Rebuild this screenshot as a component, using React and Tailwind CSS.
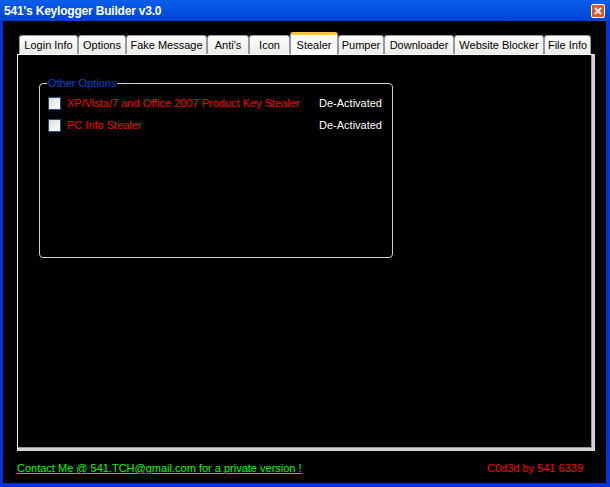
import React from "react";

const tabs = [
  { label: "Login Info", w: "w-[59px]" },
  { label: "Options", w: "w-[48px]" },
  { label: "Fake Message", w: "w-[81px]" },
  { label: "Anti's", w: "w-[42px]" },
  { label: "Icon", w: "w-[41px]" },
  { label: "Stealer", w: "w-[48px]", active: true },
  { label: "Pumper", w: "w-[46px]" },
  { label: "Downloader", w: "w-[70px]" },
  { label: "Website Blocker", w: "w-[90px]" },
  { label: "File Info", w: "w-[47px]" },
];

const options = [
  { label: "XP/Vista/7 and Office 2007 Product Key Stealer", status: "De-Activated" },
  { label: "PC Info Stealer", status: "De-Activated" },
];

function Checkbox() {
  return (
    <span className="block w-[13px] h-[13px] border border-[#1c5180] bg-gradient-to-br from-[#dcdcd7] to-[#ffffff]" />
  );
}

const App = () => {
  return (
    <div
      className="w-[610px] h-[487px] flex flex-col bg-[#0831d9] overflow-hidden"
      style={{ fontFamily: '"Liberation Sans", Arial, sans-serif' }}
    >
      {/* title bar */}
      <div className="h-[21px] flex items-center justify-between pl-[4px] pr-[5px] bg-gradient-to-b from-[#0a5fe8] via-[#0550e0] to-[#0343d0]">
        <span className="text-white font-bold text-[12px] tracking-[-0.2px] leading-none">
          541's Keylogger Builder v3.0
        </span>
        <span className="w-[14px] h-[14px] rounded-[2px] border border-white bg-[#e0542c] flex items-center justify-center">
          <svg width="8" height="8" viewBox="0 0 8 8">
            <path d="M1 1 L7 7 M7 1 L1 7" stroke="#fff" strokeWidth="1.8" />
          </svg>
        </span>
      </div>

      {/* client */}
      <div className="flex-1 mx-[3px] mb-[4px] mr-[4px] bg-black flex flex-col text-[11px]">
        <div className="pl-[14px] pt-[10px] flex flex-col">
          {/* tab strip */}
          <div className="flex items-end h-[23px] pl-[2px]">
            {tabs.map((t) =>
              t.active ? (
                <div
                  key={t.label}
                  className={`${t.w} shrink-0 h-[23px] -mb-[1px] z-10 bg-[#fcfcfe] border-x border-[#919b9c] border-t-[3px] border-t-[#ffc83c] rounded-t-[3px] flex items-start justify-center pt-[2px] text-black`}
                >
                  {t.label}
                </div>
              ) : (
                <div
                  key={t.label}
                  className={`${t.w} shrink-0 h-[19px] bg-gradient-to-b from-[#ffffff] to-[#ecebe6] border border-b-0 border-[#919b9c] rounded-t-[3px] flex items-center justify-center text-black`}
                >
                  {t.label}
                </div>
              )
            )}
          </div>
          {/* panel */}
          <div className="w-[578px] h-[397px] border border-[#fcfcfe] border-r-[3px] border-b-[3px] border-r-[#d6d3ce] border-b-[#d6d3ce] bg-black">
            <div className="w-full h-full border-r border-b border-[#919b9c] pl-[21px] pt-[22px]">
              <fieldset className="w-[354px] h-[181px] border border-[#d0d0bf] rounded-[4px] pl-[8px] pr-[8px]">
                <legend className="text-[#0046d5] px-[1px] -ml-[1px] leading-[13px]">Other Options</legend>
                <div className="flex flex-col gap-[9px] pt-[7px]">
                  {options.map((o) => (
                    <div key={o.label} className="flex items-center h-[13px]">
                      <Checkbox />
                      <span className="ml-[6px] text-[#ff0000] flex-1">{o.label}</span>
                      <span className="text-white mr-[2px]">{o.status}</span>
                    </div>
                  ))}
                </div>
              </fieldset>
            </div>
          </div>
        </div>
        {/* footer */}
        <div className="flex-1 flex items-center justify-between pl-[14px] pr-[23px] pt-[2px]">
          <span className="text-[#00ff00] underline">
            Contact Me @ 541.TCH@gmail.com for a private version !
          </span>
          <span className="text-[#ff0000]">C0d3d by 541 6339</span>
        </div>
      </div>
    </div>
  );
};

export default App;
